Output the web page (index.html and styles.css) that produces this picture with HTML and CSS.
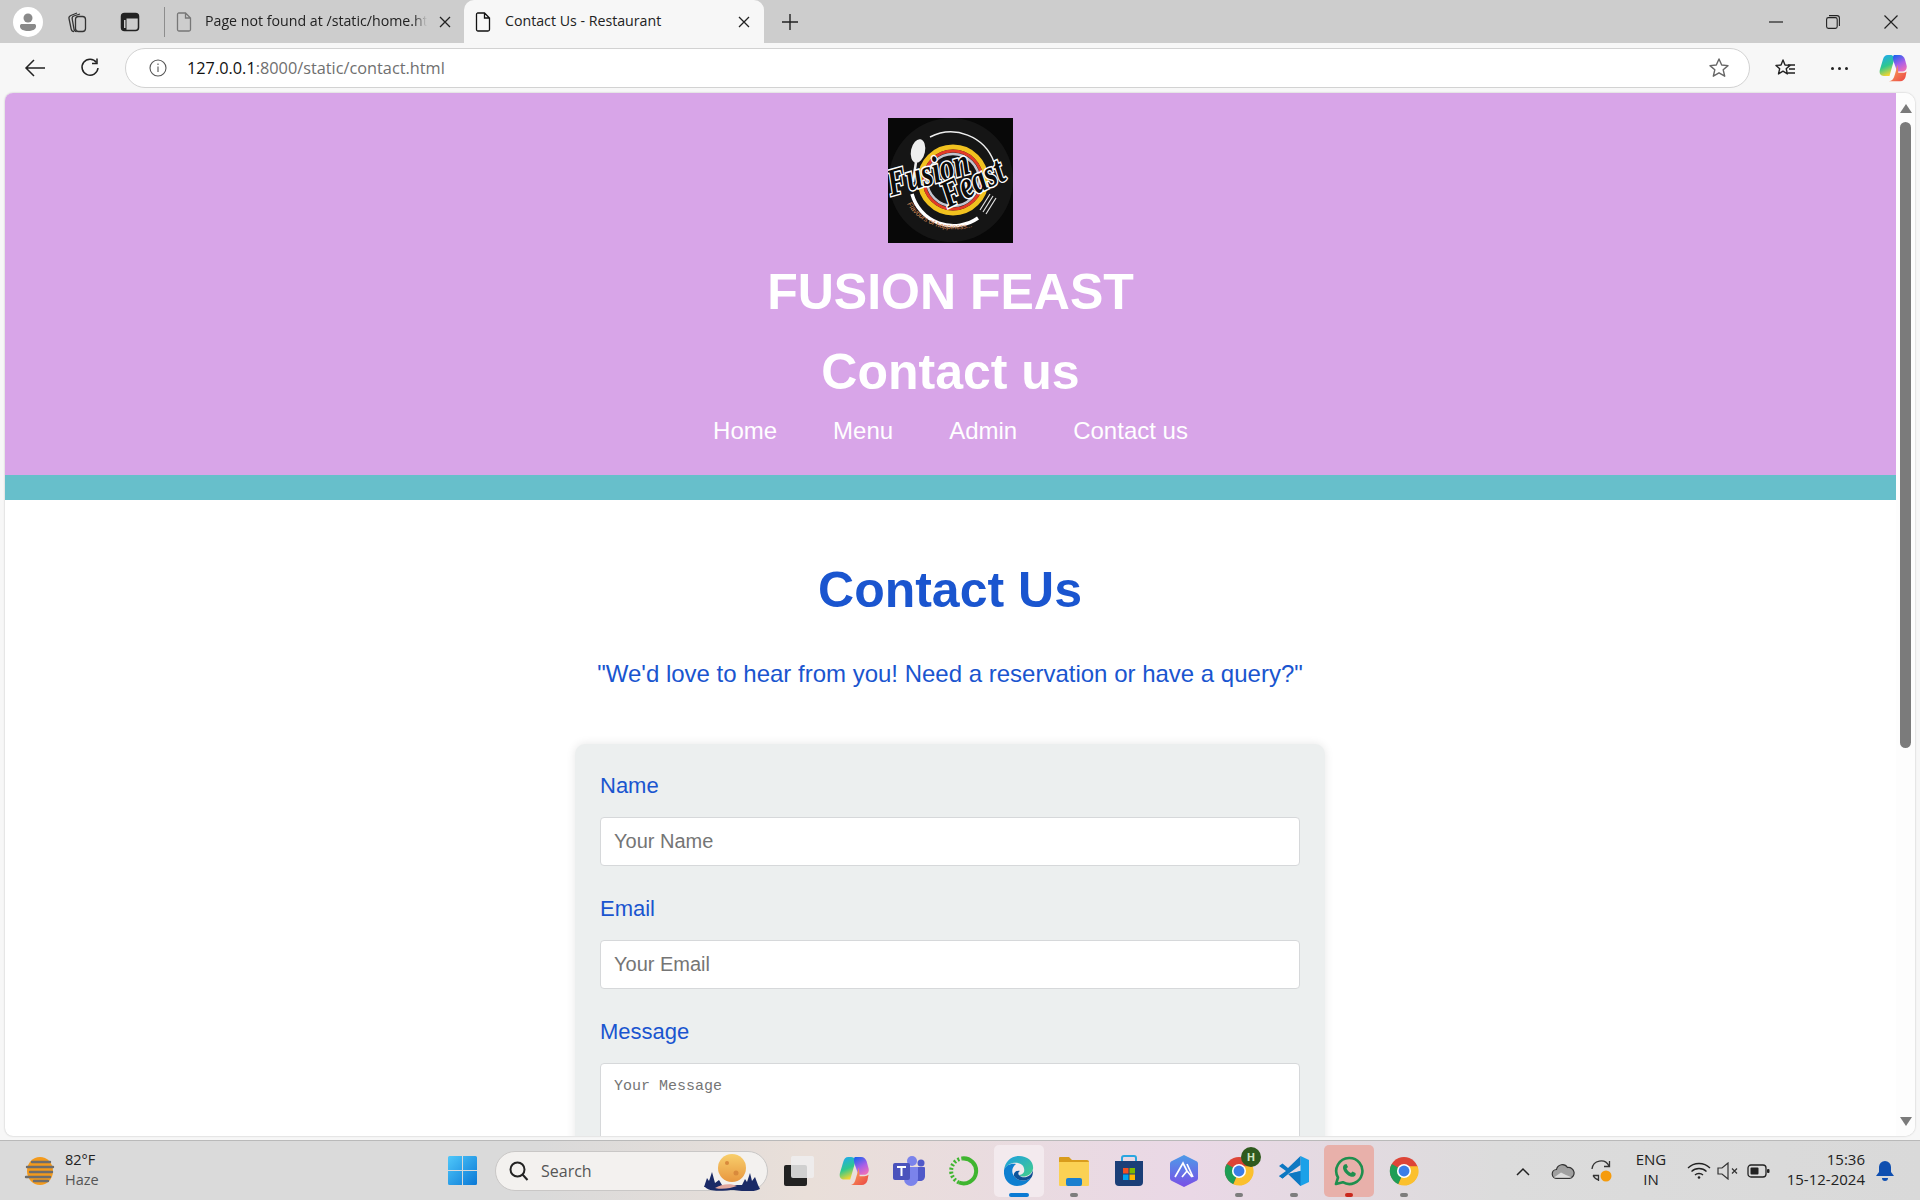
FILE: index.html
```html
<!DOCTYPE html>
<html lang="en">

<head>
    <meta charset="UTF-8">
    <meta name="viewport" content="width=device-width, initial-scale=1.0">
    <title>Contact Us - Restaurant</title>
    <link rel="stylesheet" href="styles.css">
</head>

<body>
    <!-- Shared icons -->
    <svg class="icon-defs" xmlns="http://www.w3.org/2000/svg">
        <defs>
            <linearGradient id="cop-a" x1="0.2" y1="0" x2="0.5" y2="1">
                <stop offset="0" stop-color="#1fa8f2" />
                <stop offset="0.55" stop-color="#2fc88e" />
                <stop offset="1" stop-color="#f6d52e" />
            </linearGradient>
            <linearGradient id="cop-b" x1="0.2" y1="0" x2="0.7" y2="1">
                <stop offset="0" stop-color="#1f62ee" />
                <stop offset="0.55" stop-color="#a85fe8" />
                <stop offset="1" stop-color="#ee6fb8" />
            </linearGradient>
            <linearGradient id="cop-c" x1="0" y1="0" x2="1" y2="1">
                <stop offset="0" stop-color="#f9b25c" />
                <stop offset="1" stop-color="#ec4444" />
            </linearGradient>
            <linearGradient id="edge-a" x1="0" y1="0" x2="1" y2="1">
                <stop offset="0" stop-color="#1b9de2" />
                <stop offset="1" stop-color="#44d08a" />
            </linearGradient>
            <linearGradient id="edge-b" x1="0" y1="0" x2="1" y2="1">
                <stop offset="0" stop-color="#0c59a4" />
                <stop offset="1" stop-color="#114a8b" />
            </linearGradient>
            <linearGradient id="arc-a" x1="0" y1="0" x2="0" y2="1">
                <stop offset="0" stop-color="#4d9be8" />
                <stop offset="1" stop-color="#7a4fe6" />
            </linearGradient>
            <linearGradient id="win-a" x1="0" y1="0" x2="1" y2="1">
                <stop offset="0" stop-color="#4fc8fa" />
                <stop offset="1" stop-color="#0a78d6" />
            </linearGradient>
            <linearGradient id="moon-a" x1="0" y1="0" x2="0" y2="1">
                <stop offset="0" stop-color="#f8cf6c" />
                <stop offset="1" stop-color="#e8973f" />
            </linearGradient>
        </defs>
        <symbol id="i-copilot" viewBox="0 0 32 32">
            <path d="M10 1C7 1 5.500 3 4.600 6L1 18c-1 4 .6 7 4.600 7h6.400l5-17.500C17.700 4 16.500 1 13 1z" fill="url(#cop-a)" />
            <path d="M17 1h6.500c3.200 0 5 1.900 6 4.800l2 7.200c1 3.800-1.200 7-4.800 7h-6L16.500 8C15.800 5.300 15.500 2.500 17 1z" fill="url(#cop-b)" />
            <path d="M21 12c-.8 5-2.500 10.500-3.700 14-.8 2.500-2.500 5-6 5h13c3 0 5-1.800 6-4.800l1.200-6.200c-1 1-2.500 1.500-4.500 1.500h-5z" fill="url(#cop-c)" />
        </symbol>
        <symbol id="i-chrome" viewBox="0 0 32 32">
            <circle cx="16" cy="16" r="15" fill="#dd4437" />
            <path d="M16 16L3 8.500A15 15 0 0 0 10 30z" fill="#1f9d55" />
            <path d="M16 16l-6 14A15 15 0 0 0 30.500 11H16z" fill="#fbc02d" />
            <circle cx="16" cy="16" r="7.500" fill="#fff" />
            <circle cx="16" cy="16" r="5.800" fill="#3b7de8" />
        </symbol>
        <symbol id="i-doc" viewBox="0 0 16 20">
            <path d="M2.500 1h7L14.500 6v11.500a1.500 1.500 0 0 1-1.500 1.500H3a1.500 1.500 0 0 1-1.500-1.500V2.500A1.500 1.500 0 0 1 2.500 1zM9.500 1v5h5" fill="none" stroke="currentColor" stroke-width="1.300" />
        </symbol>
        <symbol id="i-close" viewBox="0 0 12 12">
            <path d="M1 1l10 10M11 1L1 11" fill="none" stroke="#222" stroke-width="1.300" />
        </symbol>
    </svg>

    <div class="browser">
        <!-- Tab strip -->
        <div class="tabstrip">
            <span class="profile">
                <svg width="18" height="20" viewBox="0 0 18 20">
                    <circle cx="9" cy="6" r="4.500" fill="#8a8a8a" />
                    <path d="M1 13.500c0-1 1-1.500 2-1.500h12c1 0 2 .5 2 1.500v1C17 17.500 13 19 9 19s-8-1.500-8-4.500z" fill="#8a8a8a" />
                </svg>
            </span>
            <svg class="strip-icon workspaces" width="22" height="24" viewBox="0 0 22 24" fill="none" stroke="#333" stroke-width="1.300">
                <path d="M8 21.500c-1.500 0-2.500-1-2.800-2.400L3 8.500C2.700 7 3.500 6 4.800 5.500L11 3" />
                <path d="M10.500 21.500c-1.500 0-2.200-1-2.500-2.400L6.200 9c-.3-1.500.3-2.500 1.600-3L14 4" />
                <rect x="9.500" y="6.500" width="10" height="15" rx="3" />
            </svg>
            <svg class="strip-icon tabs-icon" width="20" height="20" viewBox="0 0 20 20">
                <rect x="1.500" y="1.500" width="17" height="17" rx="3" fill="none" stroke="#222" stroke-width="1.500" />
                <path d="M1.500 4.500a3 3 0 0 1 3-3h11a3 3 0 0 1 3 3v2h-17zM1.500 6h5v12.500h-2a3 3 0 0 1-3-3z" fill="#222" />
                <rect x="4" y="8" width="1.500" height="8" fill="#cdcdcd" />
            </svg>
            <span class="tab-sep"></span>
            <div class="tab">
                <svg class="tab-doc doc-muted" width="16" height="20"><use href="#i-doc" /></svg>
                <span class="tab-title tab-title-fade">Page not found at /static/home.ht</span>
                <svg class="tab-close" width="12" height="12"><use href="#i-close" /></svg>
            </div>
            <div class="tab tab-active">
                <svg class="tab-doc" width="16" height="20"><use href="#i-doc" /></svg>
                <span class="tab-title">Contact Us - Restaurant</span>
                <svg class="tab-close" width="12" height="12"><use href="#i-close" /></svg>
            </div>
            <svg class="new-tab" width="18" height="18" viewBox="0 0 18 18">
                <path d="M9 1v16M1 9h16" stroke="#222" stroke-width="1.400" />
            </svg>
            <div class="window-controls">
                <svg width="14" height="14" viewBox="0 0 14 14" class="win-min"><path d="M0 7h14" stroke="#222" stroke-width="1.200" /></svg>
                <svg width="14" height="14" viewBox="0 0 14 14" class="win-max" fill="none" stroke="#222" stroke-width="1.100">
                    <rect x=".6" y="2.600" width="10.600" height="10.800" rx="1.800" />
                    <path d="M3 .6h8a2.400 2.400 0 0 1 2.400 2.400v8" />
                </svg>
                <svg width="14" height="14" viewBox="0 0 14 14" class="win-close"><path d="M.5.500l13 13M13.500.500l-13 13" stroke="#222" stroke-width="1.200" /></svg>
            </div>
        </div>

        <!-- Address bar -->
        <div class="toolbar">
            <svg class="tool-back" width="22" height="20" viewBox="0 0 22 20" fill="none" stroke="#222" stroke-width="1.500">
                <path d="M21 10H2M10 2l-8 8 8 8" />
            </svg>
            <svg class="tool-reload" width="20" height="20" viewBox="0 0 20 20" fill="none" stroke="#222" stroke-width="1.500">
                <path d="M16.500 4.500A8 8 0 1 0 18 10" />
                <path d="M17 .5v5h-5" />
            </svg>
            <div class="addressbar">
                <svg width="18" height="18" viewBox="0 0 18 18" fill="none" stroke="#555" stroke-width="1.100">
                    <circle cx="9" cy="9" r="8" />
                    <path d="M9 7.500V13M9 4.500v1.500" />
                </svg>
                <span class="url"><b>127.0.0.1</b>:8000/static/contact.html</span>
                <svg class="addr-star" width="22" height="22" viewBox="0 0 22 22">
                    <path d="M11 2l2.700 6 6.300.6-4.800 4.200 1.500 6.400L11 15.800 5.300 19.200l1.500-6.400L2 8.600 8.300 8z" fill="none" stroke="#666" stroke-width="1.400" stroke-linejoin="round" />
                </svg>
            </div>
            <svg class="tool-fav" width="22" height="20" viewBox="0 0 22 20" fill="none" stroke="#222" stroke-width="1.400">
                <path d="M9 2l2 5 5 .4-3.800 3.300 1.200 5.200L9 13.200l-4.500 2.700 1.200-5.200L2 7.400 7 7z" stroke-linejoin="round" />
                <path d="M14 7h7M15 11h6M14 15h7" />
            </svg>
            <span class="tool-dots"><i></i><i></i><i></i></span>
            <svg class="tool-copilot" width="28" height="28"><use href="#i-copilot" /></svg>
        </div>

        <!-- Browser viewport -->
        <div class="viewport">
            <div class="page">
                <header class="site-header">
                    <svg class="logo" width="125" height="125" viewBox="0 0 125 125">
                        <rect width="125" height="125" fill="#080808" />
                        <circle cx="63" cy="62" r="62" fill="#151515" />
                        <path d="M42 19A46 46 0 0 1 106 44" fill="none" stroke="#eee" stroke-width="1.500" />
                        <path d="M24 76A43 43 0 0 0 90 100" fill="none" stroke="#fff" stroke-width="3.500" />
                        <circle cx="65" cy="62" r="33" fill="none" stroke="#f2c21f" stroke-width="5" />
                        <circle cx="65" cy="62" r="29" fill="none" stroke="#e23a28" stroke-width="3" />
                        <circle cx="65" cy="62" r="26" fill="#151515" stroke="#c3c5cf" stroke-width="2.500" />
                        <ellipse cx="30" cy="33" rx="7" ry="12" transform="rotate(12 30 33)" fill="#eee" />
                        <path d="M28 44l-3 20" stroke="#eee" stroke-width="2.500" />
                        <path d="M92 92l10-16M95 94l10-16M98 96l10-16" stroke="#ddd" stroke-width="1.200" />
                        <text class="logo-script" transform="translate(3 78) rotate(-16) scale(.75 1)">Fusion</text>
                        <text class="logo-script" transform="translate(60 90) rotate(-26) scale(.76 1)">Feast</text>
                        <path id="logo-tagline" d="M19 86C36 112 70 118 96 104" fill="none" />
                        <text class="logo-tag"><textPath href="#logo-tagline">Flavours of happiness...</textPath></text>
                    </svg>
                    <h1>FUSION FEAST</h1>
                    <h2>Contact us</h2>
                    <nav class="site-nav">
                        <a href="#">Home</a>
                        <a href="#">Menu</a>
                        <a href="#">Admin</a>
                        <a href="#">Contact us</a>
                    </nav>
                </header>
                <div class="teal-band"></div>

                <main class="contact">
                    <h2 class="contact-title">Contact Us</h2>
                    <p class="contact-sub">"We'd love to hear from you! Need a reservation or have a query?"</p>
                    <form class="contact-form">
                        <div class="form-group">
                            <label for="name">Name</label>
                            <input type="text" id="name" placeholder="Your Name">
                        </div>
                        <div class="form-group">
                            <label for="email">Email</label>
                            <input type="email" id="email" placeholder="Your Email">
                        </div>
                        <div class="form-group">
                            <label for="message">Message</label>
                            <textarea id="message" placeholder="Your Message"></textarea>
                        </div>
                    </form>
                </main>
            </div>
            <div class="scrollbar">
                <span class="arrow-up"></span>
                <span class="thumb"></span>
                <span class="arrow-down"></span>
            </div>
        </div>

        <!-- Windows taskbar -->
        <footer class="taskbar">
            <div class="weather">
                <svg width="32" height="30" viewBox="0 0 32 30">
                    <ellipse cx="16" cy="15" rx="13" ry="14" fill="#f39a1c" />
                    <path d="M8 6h18M3 11h26M6 16h22M2 21h24M10 25h14" stroke="#6d6d6d" stroke-width="2.400" stroke-linecap="round" />
                </svg>
                <div class="weather-text">
                    <span>82°F</span>
                    <span class="muted">Haze</span>
                </div>
            </div>
            <svg class="start" width="29" height="29" viewBox="0 0 29 29">
                <path d="M0 1.500A1.500 1.500 0 0 1 1.500 0H14v14H0zM15 0h12.500A1.500 1.500 0 0 1 29 1.500V14H15zM0 15h14v14H1.500A1.500 1.500 0 0 1 0 27.500zM15 15h14v12.500a1.500 1.500 0 0 1-1.500 1.500H15z" fill="url(#win-a)" />
            </svg>
            <div class="search">
                <svg width="20" height="20" viewBox="0 0 20 20" fill="none" stroke="#222" stroke-width="2">
                    <circle cx="8.500" cy="8.500" r="7" />
                    <path d="M13.500 13.500l5 5.500" />
                </svg>
                <span class="search-label">Search</span>
                <svg class="search-art" width="58" height="40" viewBox="0 0 58 40">
                    <circle cx="29" cy="17" r="14" fill="url(#moon-a)" />
                    <circle cx="24" cy="12" r="2" fill="#d98a3c" />
                    <circle cx="33" cy="22" r="2.500" fill="#d98a3c" />
                    <path d="M1 36l3-9 2 3 3-9 3 11 4-3 3 5h20l3-6 2 3 3-9 2 8 3-4 3 8 2 4c-8 4-18 2-26 1-8 0-24 3-29-3z" fill="#1a2a66" />
                    <path d="M12 37c6-4 16-5 22-2-6 2-14 4-22 2z" fill="#e2a8a0" />
                </svg>
            </div>
            <div class="apps">
                <span class="app">
                    <svg width="30" height="30" viewBox="0 0 30 30">
                        <rect x="0" y="9" width="23" height="21" rx="2" fill="#222" />
                        <rect x="7" y="0" width="23" height="22" rx="2" fill="#eee" fill-opacity=".85" />
                    </svg>
                </span>
                <span class="app"><svg width="30" height="30"><use href="#i-copilot" /></svg></span>
                <span class="app">
                    <svg width="32" height="30" viewBox="0 0 32 30">
                        <circle cx="19" cy="5" r="5" fill="#7b83eb" />
                        <circle cx="28" cy="7" r="3.500" fill="#5059c9" />
                        <path d="M22 11h9a1 1 0 0 1 1 1v8c0 3-2 5-5 5h-5z" fill="#5059c9" />
                        <path d="M10 11h15v12a7 7 0 0 1-14 0z" fill="#7b83eb" />
                        <rect x="0" y="7" width="17" height="17" rx="2" fill="#4b53bc" />
                        <path d="M4 11h9M8.500 11v9" stroke="#fff" stroke-width="2" />
                    </svg>
                </span>
                <span class="app">
                    <svg width="30" height="30" viewBox="0 0 30 30" fill="none">
                        <path d="M13 2.500A12.500 12.500 0 1 1 10 26.500" stroke="#3fb52f" stroke-width="4" />
                        <path d="M10 26.500A12.500 12.500 0 0 1 13 2.500" stroke="#3fb52f" stroke-width="4" stroke-dasharray="2 2" />
                    </svg>
                </span>
                <span class="app app-active">
                    <svg width="30" height="30" viewBox="0 0 30 30">
                        <path d="M15 0C7 0 1 6 0 14c3-6 9-8 14-7 5 1 7 5 6 9-1 2-3 3-5 3 3 3 12 2 14-6C30 6 24 0 15 0z" fill="url(#edge-a)" />
                        <path d="M0 14c-1 9 5 16 13 16 6 0 11-3 14-8-5 4-14 3-17-2-3-4-2-9 2-12C7 7 2 9 0 14z" fill="#0f7fd0" />
                        <path d="M10 20c3 5 12 6 17 2 1-1 2-3 2-8-2 8-11 9-14 5-1-1-1-3 1-4-3-1-7 1-6 5z" fill="url(#edge-b)" />
                    </svg>
                    <i class="app-dot dot-wide"></i>
                </span>
                <span class="app">
                    <svg width="30" height="30" viewBox="0 0 30 30">
                        <path d="M0 2a1 1 0 0 1 1-1h9l3 3h15a2 2 0 0 1 2 2v4H0z" fill="#d99c1c" />
                        <path d="M0 6h30v23a1 1 0 0 1-1 1H1a1 1 0 0 1-1-1z" fill="#fbd154" />
                        <rect x="7" y="22" width="16" height="8" rx="2" fill="#1a7fcf" />
                    </svg>
                    <i class="app-dot"></i>
                </span>
                <span class="app">
                    <svg width="30" height="32" viewBox="0 0 30 32">
                        <path d="M8 8V3a2 2 0 0 1 2-2h10a2 2 0 0 1 2 2v5" fill="none" stroke="#2aa6e0" stroke-width="2" />
                        <path d="M1 6h28v21a4 4 0 0 1-4 4H5a4 4 0 0 1-4-4z" fill="#1b3f78" />
                        <rect x="9" y="13" width="5.500" height="5.500" fill="#f25022" />
                        <rect x="15.500" y="13" width="5.500" height="5.500" fill="#7fba00" />
                        <rect x="9" y="19.500" width="5.500" height="5.500" fill="#00a4ef" />
                        <rect x="15.500" y="19.500" width="5.500" height="5.500" fill="#ffb900" />
                    </svg>
                </span>
                <span class="app">
                    <svg width="28" height="32" viewBox="0 0 28 32">
                        <path d="M14 0l12 6c1.500.8 2 1.500 2 3v14c0 1.500-.5 2.200-2 3l-12 6-12-6c-1.500-.8-2-1.500-2-3V9c0-1.500.5-2.200 2-3z" fill="url(#arc-a)" />
                        <path d="M5 22L13 8l4 8M12 22l5-6 5 6M17 9l6 13" fill="none" stroke="#fff" stroke-width="1.700" />
                    </svg>
                </span>
                <span class="app">
                    <svg width="30" height="30" class="chrome-h"><use href="#i-chrome" /></svg>
                    <span class="profile-badge">H</span>
                    <i class="app-dot"></i>
                </span>
                <span class="app">
                    <svg width="30" height="30" viewBox="0 0 30 30">
                        <path d="M21.500 0L30 4v22l-8.500 4L10 18l11.500-3z" fill="#1ba1e8" />
                        <path d="M21.500 0v9L9 18l-5.500 4.500L0 20l7-5-7-5 3.500-2.500L9 12z" fill="#0d78c2" />
                        <path d="M21.500 21v9L9 18 3.500 22.500 0 20l21.500-5z" fill="#0d78c2" />
                    </svg>
                    <i class="app-dot"></i>
                </span>
                <span class="app app-alert">
                    <svg width="30" height="30" viewBox="0 0 30 30" fill="none">
                        <path d="M15 2a13 13 0 0 0-11 19.500L2 28l6.800-1.800A13 13 0 1 0 15 2z" stroke="#1f8f4e" stroke-width="2.600" stroke-linejoin="round" />
                        <path d="M10.500 8.500c-1.500 1-2 3-1 5.500 1 2.500 4 5.500 7 6.500 2.500.8 4.500 0 5-1.500.3-.8.300-1.500 0-2l-3-1.500-1.500 1.500c-2-.8-3.500-2.300-4.500-4.500L14 11l-1.500-3z" fill="#1f8f4e" />
                    </svg>
                    <i class="app-dot dot-red"></i>
                </span>
                <span class="app">
                    <svg width="30" height="30"><use href="#i-chrome" /></svg>
                    <i class="app-dot"></i>
                </span>
            </div>
            <div class="tray">
                <svg width="24" height="14" viewBox="0 0 24 14" fill="none" stroke="#222" stroke-width="1.500"><path d="M6 11l6-6 6 6" /></svg>
                <svg width="24" height="18" viewBox="0 0 24 18">
                    <path d="M6 16.500a4.500 4.500 0 0 1-.5-9A6 6 0 0 1 16.500 5.500 5.500 5.500 0 0 1 18.500 16.500z" fill="#a0a0a0" stroke="#333" stroke-width="1.200" />
                    <path d="M3 15.500l7-5 5 2.500 6 2.500z" fill="#dcdcdc" />
                </svg>
                <svg width="24" height="24" viewBox="0 0 24 24">
                    <path d="M1 10a9 9 0 0 1 17-3M18.500 2v5.500H13M2 16.500h5.500V22M2 16.500A9 9 0 0 0 8 21" fill="none" stroke="#333" stroke-width="1.300" />
                    <circle cx="15" cy="17" r="5.500" fill="#f59b0c" />
                </svg>
                <div class="lang"><span>ENG</span><span>IN</span></div>
                <div class="tray-status">
                    <svg width="24" height="18" viewBox="0 0 24 18" fill="none" stroke="#222" stroke-width="1.300">
                        <path d="M1 6c6-6 16-6 22 0M4.500 9.500c4-4 11-4 15 0M8 13c2-2 6-2 8 0" />
                        <circle cx="12" cy="15.500" r="1.300" fill="#222" stroke="none" />
                    </svg>
                    <svg width="24" height="18" viewBox="0 0 24 18" fill="none" stroke="#333" stroke-width="1.200">
                        <path d="M1 6h4l6-5v16l-6-5H1zM15 6.500l5 5M20 6.500l-5 5" />
                    </svg>
                    <svg width="24" height="14" viewBox="0 0 24 14">
                        <rect x="1" y="1" width="18" height="12" rx="3" fill="none" stroke="#222" stroke-width="1.300" />
                        <rect x="3.500" y="3.500" width="8" height="7" rx="1" fill="#222" />
                        <rect x="20" y="5" width="2.500" height="4" rx="1" fill="#222" />
                    </svg>
                </div>
                <div class="clock"><span>15:36</span><span>15-12-2024</span></div>
                <svg class="bell" width="20" height="22" viewBox="0 0 20 22">
                    <path d="M10 1a6 6 0 0 0-6 6v5l-3 4h18l-3-4V7a6 6 0 0 0-6-6z" fill="#0f4fb0" />
                    <path d="M7 18h6a3 3 0 0 1-6 0z" fill="#0f4fb0" />
                </svg>
            </div>
        </footer>
    </div>
</body>

</html>
```

FILE: styles.css
```css
/* Reset some basic elements */
* {
    margin: 0;
    padding: 0;
    box-sizing: border-box;
}

html,
body {
    height: 1200px;
    overflow: hidden;
}

body {
    font-family: 'Liberation Sans', Arial, sans-serif;
    background-color: #f7f7f7;
}

.icon-defs {
    position: absolute;
    width: 0;
    height: 0;
}

.browser {
    display: flex;
    flex-direction: column;
    height: 1200px;
}

/* Tab strip */
.tabstrip {
    display: flex;
    align-items: center;
    flex: 0 0 43px;
    background-color: #cdcdcd;
    font-family: 'Open Sans', sans-serif;
    font-size: 14.2px;
    color: #222;
}

.profile {
    display: flex;
    align-items: center;
    justify-content: center;
    width: 30px;
    height: 30px;
    margin-left: 13px;
    border-radius: 50%;
    background-color: #fff;
}

.workspaces {
    margin-left: 23px;
}

.tabs-icon {
    margin-left: 32px;
}

.tab-sep {
    width: 1px;
    height: 30px;
    margin-left: 24px;
    background-color: #8d8d8d;
}

.tab {
    display: flex;
    align-items: center;
    width: 293px;
    height: 43px;
    padding-left: 5px;
    margin-left: 6px;
}

.tab-doc {
    flex: 0 0 16px;
    color: #111;
}

.doc-muted {
    color: #777;
}

.tab-title {
    width: 222px;
    margin-left: 13px;
    padding-bottom: 3px;
    white-space: nowrap;
    overflow: hidden;
}

.tab-title-fade {
    -webkit-mask-image: linear-gradient(90deg, #000 94%, transparent);
    mask-image: linear-gradient(90deg, #000 94%, transparent);
}

.tab-close {
    flex: 0 0 12px;
    margin-left: 12px;
}

.tab-active {
    width: 300px;
    margin-left: 0;
    padding-left: 11px;
    background-color: #f7f7f7;
    border-radius: 10px 10px 0 0;
}

.tab-active .tab-title {
    width: 233px;
    margin-left: 14px;
}

.tab-active .tab-close {
    margin-left: 0;
}

.new-tab {
    margin-left: 17px;
}

.window-controls {
    display: flex;
    align-items: center;
    margin-left: auto;
    margin-right: 22px;
}

.win-max {
    margin-left: 43px;
}

.win-close {
    margin-left: 44px;
}

/* Toolbar */
.toolbar {
    display: flex;
    align-items: center;
    flex: 0 0 50px;
    background-color: #f7f7f7;
}

.tool-back {
    margin-left: 24px;
}

.tool-reload {
    margin-left: 34px;
}

.addressbar {
    display: flex;
    align-items: center;
    width: 1625px;
    height: 40px;
    margin-left: 25px;
    padding-left: 23px;
    background-color: #fff;
    border: 1.5px solid #d2d2d2;
    border-radius: 20px;
}

.url {
    margin-left: 20px;
    font-family: 'Open Sans', sans-serif;
    font-size: 16.3px;
    color: #6f6f6f;
}

.url b {
    font-weight: normal;
    color: #111;
}

.addr-star {
    margin-left: auto;
    margin-right: 19px;
}

.tool-fav {
    margin-left: 24px;
}

.tool-dots {
    display: flex;
    gap: 4px;
    margin-left: 35px;
}

.tool-dots i {
    width: 3px;
    height: 3px;
    border-radius: 50%;
    background-color: #222;
}

.tool-copilot {
    margin-left: 31px;
}

/* Browser viewport */
.viewport {
    display: flex;
    flex: 0 0 1043px;
    width: 1910px;
    margin-left: 5px;
    overflow: hidden;
    background-color: #fff;
    border-radius: 8px 10px 10px 8px;
    box-shadow: 0 0 2px rgba(0, 0, 0, 0.25);
}

.page {
    flex: 0 0 1891px;
    overflow: hidden;
}

.scrollbar {
    display: flex;
    flex-direction: column;
    align-items: center;
    flex: 1;
    padding: 11px 0 10px;
    background-color: #fdfdfd;
}

.arrow-up {
    width: 0;
    height: 0;
    border-left: 6px solid transparent;
    border-right: 6px solid transparent;
    border-bottom: 9px solid #7b7b7b;
}

.thumb {
    width: 11px;
    height: 626px;
    margin-top: 9px;
    background-color: #7b7b7b;
    border-radius: 6px;
}

.arrow-down {
    width: 0;
    height: 0;
    margin-top: auto;
    border-left: 6px solid transparent;
    border-right: 6px solid transparent;
    border-top: 9px solid #7b7b7b;
}

/* Site header */
.site-header {
    padding: 25px 0 30px;
    background-color: #d8a5e8;
    color: #fff;
    text-align: center;
}

.logo {
    display: block;
    margin: 0 auto;
}

.logo-script {
    font-family: 'Liberation Serif', serif;
    font-style: italic;
    font-weight: bold;
    font-size: 38px;
    fill: #0c0c0c;
    stroke: #fff;
    stroke-width: 3px;
    paint-order: stroke;
}

.logo-tag {
    font-family: 'Liberation Sans', sans-serif;
    font-style: italic;
    font-size: 7px;
    fill: #d98a56;
}

.site-header h1 {
    margin-top: 22px;
    font-size: 50px;
    line-height: 55px;
}

.site-header h2 {
    margin-top: 25px;
    font-size: 50px;
    line-height: 55px;
}

.site-nav {
    display: flex;
    justify-content: center;
    gap: 56px;
    margin-top: 17px;
    font-size: 24px;
    line-height: 28px;
}

.site-nav a {
    color: #fff;
    text-decoration: none;
}

.teal-band {
    height: 25px;
    background-color: #67bfcb;
}

/* Contact form */
.contact {
    padding-right: 1px;
    color: #1a55cf;
    text-align: center;
}

.contact-title {
    margin-top: 63px;
    font-size: 50px;
    line-height: 55px;
}

.contact-sub {
    margin-top: 42px;
    font-size: 24px;
    line-height: 28px;
}

.contact-form {
    width: 750px;
    height: 500px;
    margin: 56px auto 0;
    padding: 29px 25px;
    background-color: #ecefef;
    border-radius: 10px;
    box-shadow: 0 0 10px rgba(0, 0, 0, 0.1);
    text-align: left;
}

.form-group {
    margin-bottom: 30px;
}

.form-group label {
    display: block;
    margin-bottom: 18px;
    font-size: 22px;
    line-height: 26px;
}

.form-group input,
.form-group textarea {
    display: block;
    width: 100%;
    padding: 0 13px;
    background-color: #fff;
    border: 1px solid #d6d8da;
    border-radius: 4px;
    outline: none;
    color: #222;
}

.form-group input {
    height: 49px;
    font-family: 'Liberation Sans', sans-serif;
    font-size: 20px;
}

.form-group textarea {
    height: 150px;
    padding-top: 14px;
    font-family: 'Liberation Mono', monospace;
    font-size: 15px;
}

/* Taskbar */
.taskbar {
    display: flex;
    align-items: center;
    flex: 0 0 60px;
    margin-top: auto;
    background: linear-gradient(90deg, #dadada 0%, #dadada 28%, #e9dfd9 42%, #ead8e6 62%, #dcdcdc 78%, #d9d9d9 100%);
    border-top: 1px solid #b9b9b9;
    font-family: 'Open Sans', sans-serif;
    color: #222;
}

.weather {
    display: flex;
    align-items: center;
    flex: 0 0 448px;
    padding-left: 24px;
    gap: 9px;
}

.weather-text {
    display: flex;
    flex-direction: column;
    gap: 3px;
    padding-bottom: 2px;
    font-size: 14.5px;
    line-height: 17px;
}

.muted {
    color: #555;
}

.search {
    display: flex;
    align-items: center;
    flex: 0 0 273px;
    height: 40px;
    margin-left: 18px;
    padding: 0 6px 0 13px;
    background-color: #f3f1ef;
    border: 1px solid #c9c7c6;
    border-radius: 20px;
}

.search-label {
    margin-left: 12px;
    font-size: 16px;
    color: #555;
}

.search-art {
    margin-left: auto;
}

.apps {
    display: flex;
    gap: 5px;
    margin-left: 6px;
}

.app {
    position: relative;
    display: flex;
    align-items: center;
    justify-content: center;
    width: 50px;
    height: 52px;
    border-radius: 5px;
}

.app-active {
    background-color: #f3eaee;
}

.app-alert {
    background-color: #e8b0aa;
}

.app-dot {
    position: absolute;
    bottom: 0;
    left: 21px;
    width: 8px;
    height: 4px;
    border-radius: 2px;
    background-color: #7d7d7d;
}

.dot-wide {
    left: 15px;
    width: 20px;
    background-color: #0c7ad4;
}

.dot-red {
    background-color: #c9271d;
}

.profile-badge {
    position: absolute;
    top: 2px;
    right: 3px;
    width: 20px;
    height: 20px;
    border-radius: 50%;
    background-color: #2f5a1e;
    color: #cfe3bf;
    font-size: 11px;
    font-weight: bold;
    line-height: 20px;
    text-align: center;
}

.tray {
    display: flex;
    align-items: center;
    gap: 16px;
    margin-left: auto;
    padding-right: 25px;
}

.lang,
.clock {
    display: flex;
    flex-direction: column;
    gap: 3px;
    padding-bottom: 2px;
    font-size: 15px;
    line-height: 17px;
}

.lang {
    width: 40px;
    text-align: center;
}

.tray-status {
    display: flex;
    align-items: center;
    gap: 6px;
    margin-right: -2px;
}

.clock {
    width: 80px;
    margin-right: -6px;
    white-space: nowrap;
    text-align: right;
}
```
